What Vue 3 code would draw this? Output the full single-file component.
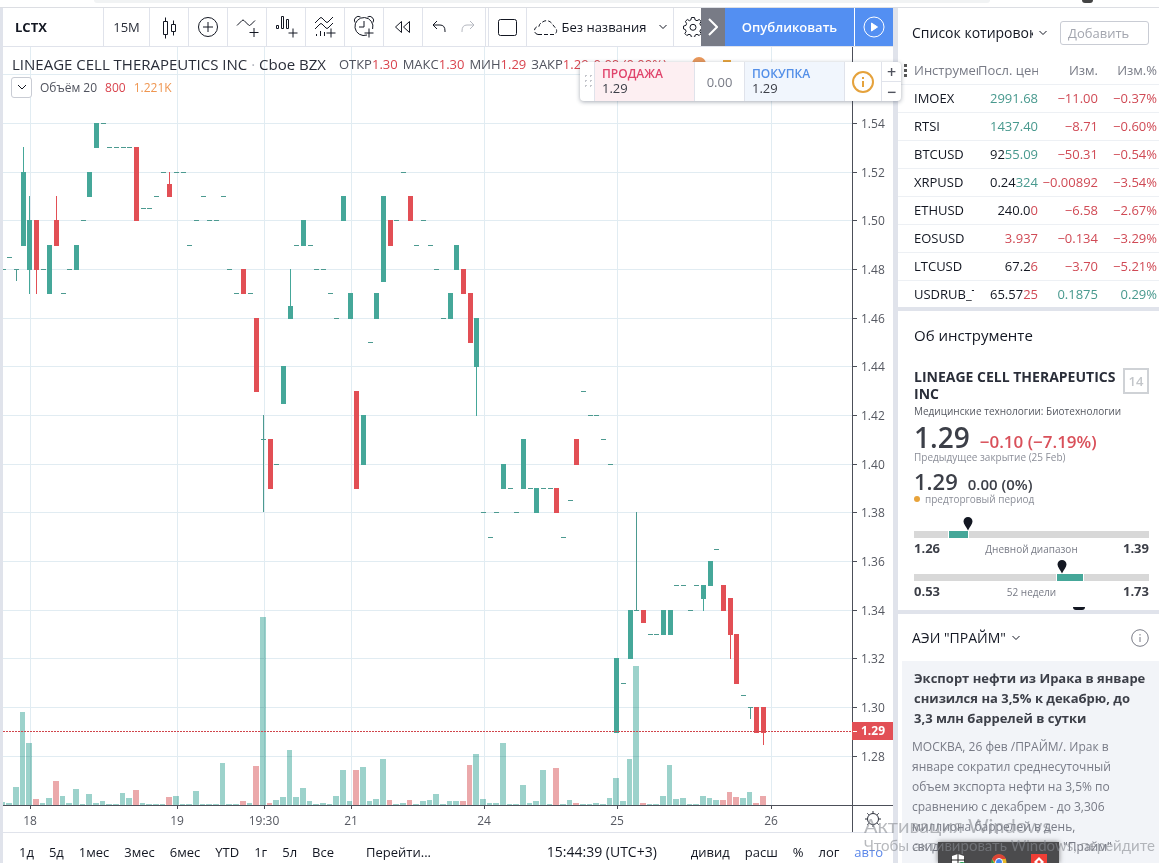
<script setup>
const G = 'g'
const R = 'r'

// [slot, colour, top of body, bottom of body, high, low]
const bodies = [
  [0, G, 1.52, 1.49, 1.53, 1.49], [1, G, 1.5, 1.48, 1.51, 1.47], [2, R, 1.5, 1.48, 1.5, 1.47],
  [4, G, 1.49, 1.47], [5, R, 1.5, 1.49, 1.51, 1.49], [8, G, 1.49, 1.48], [10, G, 1.52, 1.51],
  [11, G, 1.54, 1.53], [17, R, 1.53, 1.5], [22, R, 1.515, 1.51, 1.52, 1.51], [33, R, 1.48, 1.47],
  [35, R, 1.46, 1.43], [37, R, 1.41, 1.39], [39, G, 1.44, 1.425], [40, G, 1.465, 1.46, 1.48, 1.46],
  [42, G, 1.5, 1.49], [48, G, 1.51, 1.5], [49, G, 1.47, 1.46], [50, R, 1.43, 1.39],
  [51, G, 1.42, 1.4], [53, G, 1.47, 1.46], [54, G, 1.51, 1.475], [55, R, 1.5, 1.49],
  [58, R, 1.51, 1.5], [64, G, 1.47, 1.46], [65, G, 1.49, 1.48], [66, R, 1.48, 1.47],
  [67, R, 1.47, 1.45], [68, G, 1.46, 1.44, 1.46, 1.42], [72, G, 1.4, 1.39], [75, G, 1.41, 1.39],
  [77, G, 1.39, 1.38], [80, R, 1.39, 1.38], [83, R, 1.41, 1.4], [89, G, 1.32, 1.29],
  [91, G, 1.34, 1.32], [93, R, 1.34, 1.335], [96, G, 1.34, 1.33], [97, G, 1.34, 1.33],
  [102, G, 1.35, 1.345, 1.35, 1.34], [103, G, 1.36, 1.35], [105, R, 1.35, 1.34],
  [106, R, 1.345, 1.33, 1.345, 1.32], [107, R, 1.33, 1.31], [110, R, 1.3, 1.29],
  [111, R, 1.3, 1.29, 1.3, 1.285],
]

// price: slots that opened and closed on it
const flat = {
  1.54: [12], 1.53: [13, 14, 15, 16], 1.52: [21, 23, 24, 57], 1.51: [20, 27, 30],
  1.505: [18, 19], 1.5: [9, 26, 28, 29, 56, 60], 1.49: [25, 41, 43, 59, 61], 1.485: [-2],
  1.48: [-3, -1, 3, 7, 31, 44, 45, 62], 1.47: [6, 32, 34, 46], 1.46: [47, 63], 1.45: [52],
  1.43: [84], 1.42: [85, 86], 1.41: [36, 87], 1.4: [38, 88], 1.39: [73, 76, 78, 79],
  1.385: [82], 1.38: [69, 71, 74], 1.37: [70, 81], 1.365: [104], 1.35: [98, 99, 101],
  1.34: [92, 100], 1.33: [94, 95], 1.31: [90], 1.305: [108], 1.3: [109],
}
const thinWicks = [[-1, 1.48, 1.475], [36, 1.42, 1.38], [92, 1.38, 1.34], [109, 1.3, 1.295]]

// first value belongs to slot -3
const volumes = [
  3, 2, 18, 93, 62, 6, 2, 7, 24, 9, 2, 16, 1, 11, 2, 4, 1, 1, 12, 7, 15, 2, 1, 1, 1, 8, 9, 1, 1, 14,
  1, 1, 1, 42, 1, 1, 4, 2, 39, 188, 2, 5, 8, 55, 8, 17, 4, 1, 2, 1, 9, 35, 4, 35, 38, 4, 6, 46, 5,
  1, 2, 5, 1, 4, 5, 11, 1, 4, 4, 4, 40, 51, 6, 2, 2, 62, 1, 1, 20, 2, 4, 35, 1, 37, 1, 5, 2, 1, 1,
  2, 1, 7, 27, 4, 46, 139, 2, 1, 1, 9, 40, 6, 7, 1, 1, 9, 7, 5, 5, 13, 8, 7, 13, 2, 9,
]
const redVolumes = new Set([2, 5, 17, 22, 33, 35, 37, 50, 55, 58, 66, 67, 80, 83, 93, 105, 106, 107, 110, 111])

const col = (i) => Math.floor(23.3 + (20 / 3 + 0.001) * i)
const py = (p) => Math.round(123 + (1.54 - p) * 2434)

const candles = bodies.map(([i, c, t, b, h = t, l = b]) => ({
  c, x: col(i), top: py(t), h: py(b) - py(t) + 1, high: py(h), low: py(l),
}))
const dashes = Object.entries(flat).flatMap(([p, slots]) => slots.map((i) => ({ x: col(i), y: py(+p) })))
const wicks = thinWicks.map(([i, h, l]) => ({ x: col(i), y: py(h), h: py(l) - py(h) }))
const bars = volumes.map((h, k) => {
  const i = k - 3
  return { x: Math.max(3, col(i) - 3), w: col(i + 1) - col(i) - 1 - (k === 0 ? 3 : 0), h, c: redVolumes.has(i) ? R : G }
})
const levels = Array.from({ length: 14 }, (_, k) => 1.54 - k * 0.02)
const times = [[30, '18'], [177, '19'], [264, '19:30'], [351, '21'], [484, '24'], [617, '25'], [771, '26']]

const quotes = [
  ['IMOEX', '', '2991.68', 'g', '−11.00', '−0.37%', 'r'],
  ['RTSI', '', '1437.40', 'g', '−8.71', '−0.60%', 'r'],
  ['BTCUSD', '92', '55.09', 'g', '−50.31', '−0.54%', 'r'],
  ['XRPUSD', '0.24', '324', 'g', '−0.00892', '−3.54%', 'r'],
  ['ETHUSD', '240.0', '0', 'r', '−6.58', '−2.67%', 'r'],
  ['EOSUSD', '', '3.937', 'r', '−0.134', '−3.29%', 'r'],
  ['LTCUSD', '67.2', '6', 'r', '−3.70', '−5.21%', 'r'],
  ['USDRUB_TOM', '65.57', '25', 'r', '0.1875', '0.29%', 'g'],
]
const ranges = ['1д', '5д', '1мес', '3мес', '6мес', 'YTD', '1г', '5л', 'Все']
const ohlc = [['ОТКР', '1.30'], ['МАКС', '1.30'], ['МИН', '1.29'], ['ЗАКР', '1.29']]
const spans = [
  { low: '1.26', name: 'Дневной диапазон', high: '1.39', from: 15, size: 8, pin: 23 },
  { low: '0.53', name: '52 недели', high: '1.73', from: 61, size: 11, pin: 63 },
]
</script>

<template>
  <div class="page">
    <div class="browser-edge"><i class="omnibox"></i><i class="ext"></i></div>

    <div class="body">
      <main class="main">
        <header class="toolbar">
          <button class="cell symbol">LCTX</button>
          <button class="cell interval">15M</button>
          <button class="cell ic" aria-label="Свечи">
            <svg width="28" height="28" viewBox="0 0 28 28"><path d="M8.5 8.500h4v13h-4zM10.500 4.500v4M10.500 21.500v4M16.500 11.500h4v7h-4zM18.500 7.500v4M18.500 18.500v4" /></svg>
          </button>
          <button class="cell ic" aria-label="Сравнить">
            <svg width="28" height="28" viewBox="0 0 28 28"><circle cx="14" cy="14" r="9.500" /><path d="M9 14h10M14 9v10" /></svg>
          </button>
          <button class="cell ic" aria-label="Индикаторы">
            <svg width="28" height="28" viewBox="0 0 28 28"><path d="M4 12.500L9 7.500q1-1 2 0l4.500 4.500q1 1 2 0L22 7.500M16.500 19.500h9M21 15v9" /></svg>
          </button>
          <button class="cell ic" aria-label="Финансовые показатели">
            <svg width="28" height="28" viewBox="0 0 28 28"><path d="M4.500 12.500h2v3h-2zM9.500 3.500h2v12h-2zM14.500 6.500h2v9h-2zM16.500 20h9M21 15.500v9" /></svg>
          </button>
          <button class="cell ic" aria-label="Шаблоны">
            <svg width="28" height="28" viewBox="0 0 28 28"><path d="M4 10l5-5q1-1 2 0l4 4q1 1 2 0l5-5M4 16l5-5q1-1 2 0l4 4q1 1 2 0l5-5M5.500 21v2M9.500 18v5M13.500 19v4M15.500 20h9M20 15.500v9" /></svg>
          </button>
          <button class="cell ic" aria-label="Оповещение">
            <svg width="28" height="28" viewBox="0 0 28 28"><path d="M17 22A9 9 0 1 1 22.600 16M14 8v6h-5M5 9.500a4 4 0 0 1 5.500-5.500M17.500 4A4 4 0 0 1 23 9.500M14.500 20h9M19 15.500v9" /></svg>
          </button>
          <button class="cell ic" aria-label="Симулятор">
            <svg width="28" height="28" viewBox="0 0 28 28"><path d="M12.500 8.500v11L6.500 14zM20.500 8.500v11L14.500 14z" /></svg>
          </button>
          <div class="cell pair">
            <button aria-label="Отменить"><svg width="28" height="28" viewBox="0 0 28 28"><path d="M11 8L7 12l4 4M7 12h7q5 0 5 6v1" /></svg></button>
            <button aria-label="Повторить"><svg class="dim" width="28" height="28" viewBox="0 0 28 28"><path d="M16 8l4 4-4 4M20 12h-7q-5 0-5 6v1" /></svg></button>
          </div>
          <button class="cell ic first" aria-label="Макет">
            <svg width="28" height="28" viewBox="0 0 28 28"><rect x="4.500" y="6.500" width="18" height="16" rx="2" /></svg>
          </button>
          <button class="cell layout">
            <svg width="26" height="20" viewBox="0 0 26 20"><path stroke-dasharray="4 2" d="M5 17.500h16a4 4 0 0 0 1-7L18.500 6A6.500 6.500 0 0 0 9 5.500a4.500 4.500 0 0 0-3 4A4 4 0 0 0 5 17.500z" /></svg>
            <span>Без названия</span>
            <svg width="8" height="6" viewBox="0 0 8 6"><path d="M.5 1L4 4.500L7.500 1" /></svg>
          </button>
          <button class="cell gear" aria-label="Настройки">
            <svg width="20" height="20" viewBox="0 0 20 20"><path d="M8.500.5h3l.7 2.500 1.800.7 2.200-1.200 1.900 1.900-1.200 2.200.7 1.800 2.400.7v2.800l-2.400.7-.7 1.800 1.200 2.200-1.900 1.900-2.200-1.200-1.800.7-.7 2.400h-3l-.7-2.400-1.800-.7-2.200 1.200-1.900-1.900 1.200-2.200-.7-1.800L.5 11.900V9.100l2.400-.7.7-1.800-1.200-2.200 1.900-1.900L6.500 3.700 7.800 3z" /><circle cx="10" cy="10.300" r="3" /></svg>
          </button>
          <button class="scroll" aria-label="Далее"><svg width="10" height="18" viewBox="0 0 10 18"><path d="M1 1l8 8-8 8" /></svg></button>
          <button class="publish">Опубликовать</button>
          <button class="play" aria-label="Трансляция"><svg width="22" height="22" viewBox="0 0 22 22"><circle cx="11" cy="11" r="10" /><path d="M8.500 7v8l6-4z" /></svg></button>
        </header>

        <section class="chart">
          <svg class="plot" viewBox="3 47 890 785" preserveAspectRatio="xMinYMin meet">
            <g class="grid">
              <rect v-for="[x] in times" :key="x" :x="x" y="47" width="1" height="758" />
              <rect v-for="p in levels" :key="p" x="3" :y="py(p)" width="849" height="1" />
              <rect x="3" y="74" width="849" height="1" />
            </g>
            <g class="volume">
              <rect v-for="b in bars" :key="b.x" :class="b.c" :x="b.x" :y="805 - b.h" :width="b.w" :height="b.h" />
            </g>
            <g v-for="c in candles" :key="c.x" :class="c.c">
              <rect :x="c.x" :y="c.high" width="1" :height="c.low - c.high + 1" />
              <rect :x="c.x - 2" :y="c.top" width="5" :height="c.h" />
            </g>
            <g class="g flat">
              <rect v-for="d in dashes" :key="d.x" :x="d.x - 2" :y="d.y" width="5" height="1" />
              <rect v-for="w in wicks" :key="w.x" :x="w.x" :y="w.y" width="1" :height="w.h" />
            </g>
            <g class="price-line">
              <rect v-for="n in 283" :key="n" :x="n * 3" y="731" width="2" height="1" />
            </g>
            <g class="axis">
              <rect x="3" y="805" width="890" height="1" />
              <rect x="852" y="47" width="1" height="785" />
              <rect v-for="p in levels" :key="p" x="853" :y="py(p)" width="4" height="1" />
              <rect v-for="[x] in times" :key="x" :x="x" y="806" width="1" height="3" />
            </g>
            <g class="labels">
              <text v-for="p in levels" :key="p" x="861" :y="py(p) + 5">{{ p.toFixed(2) }}</text>
              <text v-for="[x, t] in times" :key="x" class="mid" :x="x" y="825">{{ t }}</text>
            </g>
            <rect class="r" x="852" y="722" width="41" height="18" />
            <rect class="tick" x="853" y="731" width="4" height="1" />
            <text class="last-label" x="861" y="735">1.29</text>
            <g class="sun"><circle cx="873" cy="819" r="5.500" /><path d="M873 811v2M873 825v2M865 819h2M879 819h2M867.300 813.300l1.500 1.500M877.200 823.200l1.500 1.500M878.700 813.300l-1.500 1.500M868.800 823.200l-1.500 1.500" /></g>
          </svg>

          <div class="legend">
            <h1>LINEAGE CELL THERAPEUTICS INC <i>·</i> Cboe BZX</h1>
            <span v-for="[k, v] in ohlc" :key="k" class="ohlc">{{ k }}<b>{{ v }}</b></span>
            <span class="ohlc"><b>0.00 (0.00%)</b></span>
            <i class="dot"></i><i class="dash"></i>
          </div>
          <div class="study">
            <button aria-label="Свернуть"><svg width="10" height="7" viewBox="0 0 10 7"><path d="M1 1l4 4 4-4" /></svg></button>
            <span>Объём 20</span><span class="red">800</span><span class="orange">1.221K</span>
          </div>
        </section>

        <footer class="bottom">
          <button v-for="r in ranges" :key="r">{{ r }}</button>
          <button class="goto">Перейти...</button>
          <span class="clock">15:44:39 (UTC+3)</span>
          <button class="adj">дивид</button>
          <button>расш</button>
          <button>%</button>
          <button>лог</button>
          <button class="auto">авто</button>
        </footer>
      </main>

      <aside class="side">
        <section class="watch">
          <header>
            <button class="list"><span>Список котировок</span><svg width="8" height="6" viewBox="0 0 8 6"><path d="M.5 1L4 4.500L7.500 1" /></svg></button>
            <input type="text" placeholder="Добавить" aria-label="Добавить инструмент" />
          </header>
          <table>
            <thead>
              <tr><th><i class="grip"></i><span>Инструмент</span></th><th><span>Посл. цена</span></th><th>Изм.</th><th>Изм.%</th></tr>
            </thead>
            <tbody>
              <tr v-for="q in quotes" :key="q[0]">
                <td><span>{{ q[0] }}</span></td>
                <td>{{ q[1] }}<em :class="q[3]">{{ q[2] }}</em></td>
                <td :class="q[6]">{{ q[4] }}</td>
                <td :class="q[6]">{{ q[5] }}</td>
              </tr>
            </tbody>
          </table>
        </section>

        <section class="about">
          <h2>Об инструменте</h2>
          <div class="company"><h3>LINEAGE CELL THERAPEUTICS INC</h3><span class="days">14</span></div>
          <p class="sector">Медицинские технологии: Биотехнологии</p>
          <p class="price"><strong>1.29</strong><span>−0.10 (−7.19%)</span></p>
          <p class="note">Предыдущее закрытие (25 Feb)</p>
          <p class="price pre"><strong>1.29</strong><span>0.00 (0%)</span></p>
          <p class="note"><i class="bullet"></i>предторговый период</p>
          <div v-for="s in spans" :key="s.name" class="span">
            <div class="track">
              <i class="fill" :style="{ left: s.from + '%', width: s.size + '%' }"></i>
              <svg class="pin" :style="{ left: s.pin + '%' }" width="10" height="14" viewBox="0 0 10 14"><path d="M5 0a4.500 4.500 0 0 1 4.500 4.500C9.500 7 6.500 10 5 13.500 3.500 10 .5 7 .5 4.500A4.500 4.500 0 0 1 5 0z" /></svg>
            </div>
            <div class="ends"><b>{{ s.low }}</b><span>{{ s.name }}</span><b>{{ s.high }}</b></div>
          </div>
          <i class="next-pin"></i>
        </section>

        <section class="news">
          <header>
            <button>АЭИ "ПРАЙМ"<svg width="8" height="6" viewBox="0 0 8 6"><path d="M.5 1L4 4.500L7.500 1" /></svg></button>
            <svg class="info" width="18" height="18" viewBox="0 0 18 18"><circle cx="9" cy="9" r="8.300" /><path d="M9 8v5M9 5v1.500" /></svg>
          </header>
          <article>
            <h4>Экспорт нефти из Ирака в январе снизился на 3,5% к декабрю, до 3,3 млн баррелей в сутки</h4>
            <p>МОСКВА, 26 фев /ПРАЙМ/. Ирак в январе сократил среднесуточный объем экспорта нефти на 3,5% по сравнению с декабрем - до 3,306 миллиона баррелей в день, свидетельствуют данные "Прайм"</p>
          </article>
        </section>
      </aside>
    </div>

    <div class="trade">
      <i class="handle"></i>
      <button class="sell"><b>ПРОДАЖА</b>1.29</button>
      <span class="spread">0.00</span>
      <button class="buy"><b>ПОКУПКА</b>1.29</button>
      <span class="warn"><svg width="22" height="22" viewBox="0 0 22 22"><circle cx="11" cy="11" r="10" /><path d="M11 10v6M11 6v2" /></svg></span>
      <span class="qty"><button>+</button><button>−</button></span>
    </div>

    <div class="tray">
      <svg width="16" height="16" viewBox="0 0 16 16"><path fill="#fff" d="M8 0l6 2v6c0 4-3 6-6 8-3-2-6-4-6-8V2z" /><path class="seam" d="M8 0v14M1 6h14" /><circle cx="12" cy="12" r="4" fill="#1e9e50" /></svg>
      <svg width="16" height="16" viewBox="0 0 16 16"><circle cx="8" cy="8" r="7.500" fill="#e8b92c" /><path fill="#dc4437" d="M1 5a7.500 7.500 0 0 1 14 0H8L5 9z" /><path fill="#279c58" d="M1 5l5 10A7.500 7.500 0 0 1 1 5z" /><circle cx="8" cy="8" r="3.500" fill="#4285f4" stroke="#fff" /></svg>
      <svg width="16" height="16" viewBox="0 0 16 16"><path fill="#ef3e36" d="M0 0h16v16H0z" /><path fill="#fff" d="M8 3l5 5-5 5-5-5z" /><path fill="#ef3e36" d="M8 6l2 2-2 2-2-2z" /></svg>
    </div>
    <div class="watermark"><p>Активация Windows</p><p>Чтобы активировать Windows, перейдите</p></div>
  </div>
</template>

<style>
html, body { background: #e0e3eb; overflow: hidden; }
</style>

<style scoped>
.page { height: 100vh; position: relative; overflow: hidden; display: flex; flex-direction: column; background: #e0e3eb; color: #131722; font: 13px/16px "Open Sans", "Noto Sans", sans-serif; }
.page *, .page *::before { box-sizing: border-box; }
h1, h2, h3, h4, p { margin: 0; font-weight: 400; }
button { font: inherit; color: inherit; border: 0; padding: 0; background: none; cursor: pointer; white-space: nowrap; }
i, em { font-style: normal; }
svg { fill: none; stroke: #131722; flex: none; display: block; }
.browser-edge { flex: none; height: 8px; background: #fff; border-bottom: 1px solid #dcdee3; display: flex; gap: 92px; }
.omnibox { height: 3px; width: 896px; margin-left: 94px; background: #f1f3f4; border-radius: 0 0 12px 12px; }
.ext { width: 11px; height: 3px; background: #444; border-radius: 0 0 3px 3px; }
.body { flex: 1; min-height: 0; display: flex; gap: 5px; padding-left: 3px; }
.main { flex: 1; min-width: 0; display: flex; flex-direction: column; }
.side { width: 261px; flex: none; display: flex; flex-direction: column; gap: 4px; }
.side > section { background: #fff; overflow: hidden; }

.toolbar { flex: none; height: 39px; display: flex; background: #fff; border-bottom: 1px solid #e0e3eb; }
.cell { flex: none; height: 38px; border-right: 1px solid #e0e3eb; display: flex; align-items: center; justify-content: center; background: #fff; }
.symbol { width: 101px; justify-content: flex-start; padding-left: 12px; font-weight: 700; }
.interval { width: 46px; color: #2a2e39; }
.ic { width: 39px; }
.pair { width: 63px; margin-right: 2px; }
.first { border-left: 1px solid #e0e3eb; width: 39px; }
.dim { stroke: #b5b8c0; }
.layout { width: 147px; gap: 2px; }
.layout svg:last-child { margin-left: 10px; }
.gear { flex: 1; border: 0; justify-content: flex-start; padding-left: 9px; overflow: hidden; }
.scroll { width: 24px; background: #787b86; display: grid; place-items: center; }
.scroll svg { stroke: #fff; stroke-width: 2; }
.publish { width: 129px; background: #538ff2; color: #fff; font-weight: 600; }
.play { width: 39px; background: #538ff2; border-left: 1px solid #fff; display: grid; place-items: center; }
.play svg { stroke: #fff; }
.play path { fill: #fff; }

.chart { flex: 1; min-height: 0; position: relative; background: #fff; overflow: hidden; }
.plot { width: 100%; height: 100%; stroke: none; }
.plot rect { shape-rendering: crispEdges; }
.grid { fill: #e1ecf2; }
.plot .g { fill: #45a799; }
.plot .r { fill: #e24f55; }
.plot .flat { fill: #4c9a90; }
.plot .volume .g { fill: #9cd2cb; }
.plot .volume .r { fill: #eba9ab; }
.volume { mix-blend-mode: multiply; }
.price-line { fill: #d0454c; }
.axis { fill: #4c4f59; }
.labels { fill: #555861; font-size: 12px; }
.mid { text-anchor: middle; }
.tick, .last-label { fill: #fff; font-size: 12px; font-weight: 700; }
.sun { stroke: #2a2e39; }
.legend { position: absolute; top: 8px; left: 9px; right: 40px; display: flex; align-items: center; gap: 5px; white-space: nowrap; color: #50535e; line-height: 18px; overflow: hidden; }
.legend h1 { font-size: 15px; line-height: 18px; color: #2a2e39; margin-right: 8px; }
.legend h1 i { color: #b2b5be; }
.ohlc b, .red { font-weight: 400; color: #d9444e; }
.dot { width: 14px; height: 14px; border-radius: 50%; background: #e8975a; margin-left: 20px; }
.dash { width: 8px; height: 8px; background: #e8a33a; margin-left: 12px; }
.study { position: absolute; top: 30px; left: 8px; display: flex; align-items: center; gap: 8px; font-size: 12px; color: #50535e; }
.study button { width: 21px; height: 21px; border: 1px solid #c9ccd4; border-radius: 3px; display: grid; place-items: center; background: #fff; }
.study .orange { color: #ef9651; }

.bottom { flex: none; height: 31px; display: flex; align-items: center; gap: 15px; padding: 8px 10px 0 16px; background: #fff; border-top: 1px solid #e0e3eb; white-space: nowrap; }
.goto { margin-left: 17px; }
.clock { margin-left: auto; font-size: 14px; }
.adj { margin-left: 19px; }
.auto { color: #5b87ea; }

.watch { flex: none; height: 299px; }
.watch header { height: 50px; display: flex; align-items: center; justify-content: space-between; padding: 0 10px 0 14px; }
.list { display: flex; align-items: center; gap: 6px; font-size: 14px; line-height: 20px; }
.list span { width: 121px; overflow: hidden; text-align: left; }
.watch input { width: 89px; height: 24px; border: 1px solid #c9ccd4; border-radius: 3px; padding: 0 7px; font: inherit; background: #fff; }
.watch input::placeholder { color: #a3a6af; opacity: 1; }
table { width: 100%; border-collapse: collapse; table-layout: fixed; }
th, td { height: 28px; padding: 0; text-align: right; white-space: nowrap; font-weight: 400; border-bottom: 1px solid #edf0f4; }
th { height: 26px; padding-bottom: 2px; color: #787b86; }
th:first-child, td:first-child { width: 80px; text-align: left; padding-left: 16px; position: relative; }
th:nth-child(2), td:nth-child(2) { width: 60px; }
th:nth-child(3), td:nth-child(3) { width: 60px; }
th:nth-child(4), td:nth-child(4) { padding-right: 2px; }
th span, td span { display: block; overflow: hidden; text-align: left; }
td span { width: 60px; }
.grip { position: absolute; left: 6px; top: 6px; width: 3px; height: 13px; background: repeating-linear-gradient(#555 0 3px, transparent 3px 5px); }
td.g, em.g { color: #48998e; }
td.r, em.r { color: #d04a55; }

.about { flex: none; height: 299px; padding: 14px 10px 0 16px; position: relative; }
.about h2 { font-size: 15px; line-height: 20px; }
.company { display: flex; justify-content: space-between; margin-top: 23px; }
.company h3 { font-size: 14px; line-height: 17px; font-weight: 700; margin-right: -4px; color: #2a2e39; }
.days { flex: none; width: 26px; height: 26px; border: 2px solid #cfd2d6; color: #c3c6ca; font-weight: 600; line-height: 22px; text-align: center; }
.sector { font-size: 10px; line-height: 18px; color: #555861; }
.price { display: flex; align-items: baseline; gap: 10px; line-height: 20px; font-weight: 600; font-size: 17px; color: #d9505a; margin-top: 7px; }
.price strong { font-size: 28px; font-weight: 600; color: #3c3f48; }
.pre { color: #3c3f48; margin-top: 9px; font-size: 15px; line-height: 20px; }
.pre strong { font-size: 22px; }
.note { font-size: 10px; line-height: 10px; color: #8b8e98; display: flex; align-items: center; }
.bullet { width: 6px; height: 6px; border-radius: 50%; background: #e8a33a; margin-right: 5px; }
.span { margin-top: 15px; }
.note + .span { margin-top: 27px; }
.track { height: 7px; background: #d8d8d8; position: relative; }
.fill { position: absolute; top: 0; bottom: 0; background: #45a799; outline: 1px solid #fff; }
.pin { position: absolute; bottom: 7px; margin-left: -5px; fill: #131722; stroke: none; }
.ends { display: flex; justify-content: space-between; margin-top: 2px; line-height: 19px; font-size: 10px; color: #787b86; }
.ends b { font-size: 13px; font-weight: 700; line-height: 16px; color: #3c3f48; }
.next-pin { position: absolute; left: 175px; bottom: 0; width: 12px; height: 3px; background: #131722; border-radius: 0 0 6px 6px; }

.news { flex: 1; min-height: 0; padding-left: 4px; }
.news header { height: 47px; display: flex; align-items: center; justify-content: space-between; padding: 0 10px; font-size: 14px; }
.news header button { display: flex; align-items: center; gap: 6px; }
.info { stroke: #787b86; }
.news article { background: #f2f4f8; padding: 7px 10px; font-size: 12px; line-height: 20px; color: #787b86; }
.news h4 { font-weight: 700; color: #3c3f48; margin-bottom: 9px; padding-left: 2px; font-size: 13px; }

.trade { position: absolute; top: 62px; right: 258px; width: 321px; height: 39px; display: flex; background: #fff; border-radius: 4px; box-shadow: 0 1px 4px rgba(60, 70, 90, .45); z-index: 2; overflow: hidden; }
.handle { width: 14px; background: radial-gradient(circle, #c4c6cc 1px, transparent 1px) 3px 11px / 5px 5px; clip-path: inset(12px 2px 12px 3px); }
.trade > button { width: 101px; padding: 0 0 2px 7px; text-align: left; line-height: 15px; display: flex; flex-direction: column; justify-content: center; color: #3c3f48; border: solid #e0e3eb; border-width: 0 1px; }
.trade > .sell { background: #fdeff2; }
.trade > .buy { background: #f1f6fd; }
.trade b { font-size: 12px; font-weight: 600; }
.sell b { color: #e0446c; }
.buy b { color: #538fe8; }
.spread { width: 49px; display: grid; place-items: center; color: #787b86; }
.warn { width: 36px; display: grid; place-items: center; }
.warn svg { stroke: #e5a23c; stroke-width: 2; }
.qty { flex: 1; display: flex; flex-direction: column; border-left: 1px solid #e0e3eb; }
.qty button { flex: 1; font-size: 16px; line-height: 16px; font-weight: 600; color: #50535e; }
.qty button + button { border-top: 1px solid #e0e3eb; }

.tray { position: absolute; right: 100px; bottom: 0; width: 121px; height: 21px; background: #4b4b4d; display: flex; justify-content: space-between; padding: 12px 12px 0; overflow: hidden; z-index: 3; box-shadow: 0 0 5px rgba(0, 0, 0, .5); }
.tray svg { stroke: none; }
.seam { stroke: #222; }
.watermark { position: absolute; right: 4px; bottom: 8px; width: 291px; z-index: 4; pointer-events: none; font-family: Lato, "Open Sans", sans-serif; color: rgba(135, 138, 145, .6); font-size: 15px; line-height: 20px; white-space: nowrap; }
.watermark p:first-child { font-size: 20px; }
</style>
